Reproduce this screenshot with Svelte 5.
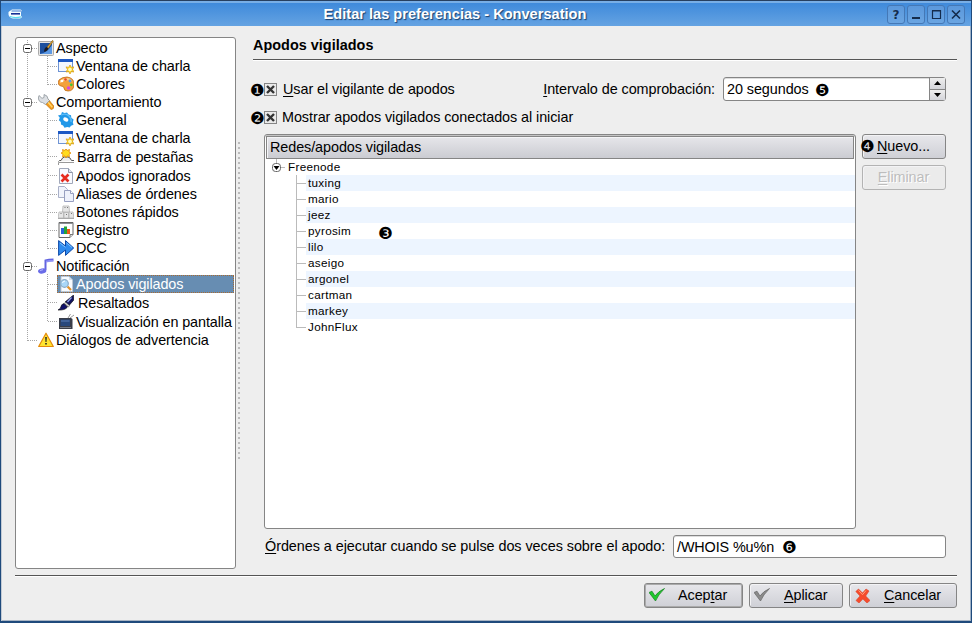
<script>
  const tree = [
    { text: 'Aspecto', icon: 'aspect', level: 0, h: 18, open: true },
    { text: 'Ventana de charla', icon: 'window', level: 1, h: 18 },
    { text: 'Colores', icon: 'palette', level: 1, h: 18 },
    { text: 'Comportamiento', icon: 'wrench', level: 0, h: 18, open: true },
    { text: 'General', icon: 'gear', level: 1, h: 18 },
    { text: 'Ventana de charla', icon: 'window', level: 1, h: 18 },
    { text: 'Barra de pestañas', icon: 'tab', level: 1, h: 19, wide: 1 },
    { text: 'Apodos ignorados', icon: 'ignore', level: 1, h: 19 },
    { text: 'Aliases de órdenes', icon: 'copy', level: 1, h: 18 },
    { text: 'Botones rápidos', icon: 'keys', level: 1, h: 18 },
    { text: 'Registro', icon: 'log', level: 1, h: 18 },
    { text: 'DCC', icon: 'forward', level: 1, h: 18 },
    { text: 'Notificación', icon: 'note', level: 0, h: 18, open: true },
    { text: 'Apodos vigilados', icon: 'search', level: 1, h: 18, selected: true },
    { text: 'Resaltados', icon: 'brush', level: 1, h: 19, wide: 2 },
    { text: 'Visualización en pantalla', icon: 'tv', level: 1, h: 19 },
    { text: 'Diálogos de advertencia', icon: 'warning', level: 0, h: 18 }
  ];
  // Vertical centre of every row, used by the connector lines.
  const mids = tree.map((r, i) => tree.slice(0, i).reduce((s, q) => s + q.h, 0) + Math.floor(r.h / 2) + 2);
  const nicks = ['tuxing', 'mario', 'jeez', 'pyrosim', 'lilo', 'aseigo', 'argonel', 'cartman', 'markey', 'JohnFlux'];
</script>

{#snippet icon(name)}
  <svg class="icon" width="16" height="16" viewBox="0 0 16 16">
    {#if name === 'aspect'}
      <rect x=".5" y="1.5" width="15" height="14" rx="1" fill="#e4e4e4" stroke="#aaa" />
      <rect x="2" y="3" width="12" height="11" fill="#1c4f9e" />
      <path d="M2 14Q9 13 14 5v9z" fill="#5b98e4" />
      <path d="M14.600 .3L8.800 7.200l1.500 1.300 5-7.300z" fill="#e5a52c" stroke="#6b4a12" stroke-width=".5" />
      <path d="M8.700 7Q6.200 7.800 6 11.800 9.500 11.500 10.400 8.500z" fill="#1a1a22" />
    {:else if name === 'window'}
      <rect x=".5" y="1.5" width="14" height="12" fill="#f3f7ff" stroke="#6f94d4" />
      <path d="M0 1h15v3H0z" fill="#1c58c4" />
      <path d="M12 7l1.300 2.400 2.700-.5-1.500 2.400L16 14l-2.700-.4L12 16l-1.300-2.400L8 14l1.500-2.600L8 8.900l2.700.5z" fill="#ffd829" stroke="#d99a10" stroke-width=".7" />
      <circle cx="12" cy="11.500" r="1.800" fill="#fffbc0" />
    {:else if name === 'palette'}
      <path d="M1 4Q4 1 9 1q7 1 7 7 0 7-6 7-4 0-4-3 0-2-3-2Q-1 9 1 4z" fill="#f3a13b" stroke="#c26a12" stroke-width=".8" />
      <path d="M2 4.500Q5 2 9 2q4 0 5 3Q8 3 2 7z" fill="#fbd08c" />
      <circle cx="4" cy="5" r="1.300" fill="#fff" /><circle cx="7.500" cy="3.500" r="1.300" fill="#e5452c" />
      <circle cx="12" cy="5" r="1.400" fill="#4f9bf0" /><circle cx="13.300" cy="8.800" r="1.400" fill="#42c832" />
      <circle cx="10.500" cy="12" r="1.700" fill="#d748e0" />
    {:else if name === 'wrench'}
      <path d="M6.500 9l4-3.500 5.300 6.500q.5 3-2.500 3.700z" fill="#f39a1c" stroke="#b86a08" stroke-width=".6" />
      <path d="M9.800 8l4.500 5.300" stroke="#ffd56a" stroke-width="1.500" />
      <path d="M1 1.500l3 2.800L6 3.500V.5q4 1 4 4.500l1.500 1.500-4 4-3-2Q1 8.500.3 4z" fill="#dcdfe3" stroke="#8e959c" stroke-width=".8" />
    {:else if name === 'gear'}
      <path d="M4 0l2.500 1L9 .5l1.500 2 2.500.7.3 2.500 2.300 1.800-.8 2.700.7 2.600-2.500 1-1.300 1.800-2.500-.6-2.700.7-1.400-2.200L3 12.500l-.2-2.600L.8 8.300l1-2.500L0 3.500l3-.8z" fill="#2298e8" />
      <path d="M3 3q5-2 8 1t2 6" fill="none" stroke="#5dbdf8" stroke-width="1.300" />
      <ellipse cx="7.800" cy="7.500" rx="2.700" ry="2" fill="#fff" transform="rotate(25 7.800 7.500)" />
    {:else if name === 'tab'}
      <path d="M.5 12.500l1-1H3q1.500-3.500 3.500-3.500H10q2 0 3.500 3.500H16" fill="#eee" stroke="#555" />
      <path d="M.5 16v-2.500H16" fill="none" stroke="#999" />
      <path d="M8-.5l1 2 2.500-1-.5 2.500 2 1-2 1.200.5 2.600L9 6.900 8 9 7 6.900 4.500 7.800 5 5.200 3 4l2-1-.5-2.500L7 1.500z" fill="#ffdc20" stroke="#e38b08" stroke-width=".8" />
    {:else if name === 'ignore'}
      <path d="M1.500.5h9l4 4v11h-13z" fill="#f8faff" stroke="#a1a8ba" /><path d="M10.500.5v4h4" fill="#dde3ee" stroke="#8e96a8" />
      <path d="M3.500 6.500l7 7M10.500 6.500l-7 7" stroke="#e62c20" stroke-width="2.600" />
    {:else if name === 'copy'}
      <path d="M.5.500h6l3 3v8h-9z" fill="#f1f4fc" stroke="#a9b0c8" /><path d="M6.500 4.500h6l3 3v8h-9z" fill="#eef1fb" stroke="#979fc0" />
      <path d="M12.500 4.500v3h3" fill="#fff" stroke="#979fc0" />
    {:else if name === 'keys'}
      <g fill="#e6e6e6" stroke="#b4b4b4" stroke-width=".8"><path d="M5 2h6l.5 6h-7zM1 8h4.500v6H0zM6 8.500h4.500V14H6zM11 8h4l1 6h-5z" /></g>
      <path d="M6.500 3.500h1M9 3.500h1M2.500 9.500h1M8 10.500h1M13 9.500h1" stroke="#777" /><path d="M0 14.500h16" stroke="#aaa" />
    {:else if name === 'log'}
      <path d="M1 .5h14v12l-3 3H1z" fill="#fff" stroke="#666" /><path d="M1 1.500h14" stroke="#8a8f94" />
      <path d="M15 12.500h-3v3" fill="#ddd" stroke="#777" />
      <path d="M3 6h3v6H3z" fill="#2a64d8" /><path d="M6 4.500h3V12H6z" fill="#25a637" /><path d="M9 7h3v5H9z" fill="#ef5a18" />
    {:else if name === 'forward'}
      <path d="M.600 .600L7.500 6V.6L15.700 8l-8.200 7.400V10L.6 15.400z" fill="#308bee" stroke="#0e49a8" />
      <path d="M2 3l5.500 4.300M8.500 2.800L14 7.500" stroke="#80c4ff" fill="none" />
    {:else if name === 'note'}
      <path d="M7.500 12V2.500q3-1 8-1" fill="none" stroke="#6264e0" stroke-width="2" /><path d="M8 3.700q3-1 7.500-.8" fill="none" stroke="#8f92f4" stroke-width="1.800" />
      <ellipse cx="4.200" cy="13" rx="4.200" ry="2.500" fill="#6a6ce8" transform="rotate(-12 4.200 13)" /><path d="M2 12.500l3-.8" stroke="#b5b8ff" />
    {:else if name === 'search'}
      <path d="M3 .5h8l3.500 3.500v11.500H3z" fill="#f7fbff" stroke="#bcc7d3" /><path d="M11 .500v3.500h3.500" fill="#d5dfe9" />
      <path d="M9.500 10.500l3.500 3.500" stroke="#e2912b" stroke-width="2.200" /><circle cx="6.500" cy="7.500" r="3.800" fill="#a9d7f8" stroke="#8aabc6" stroke-width="1.200" /><path d="M4.500 7q.5-2 2.500-2" stroke="#fff" fill="none" />
    {:else if name === 'brush'}
      <path d="M15.500 0l.3 5-4.800 5.500-4-3.500z" fill="#11125e" stroke="#000" stroke-width=".6" /><path d="M13.500 2.500l-4 4.500" stroke="#8fa0e8" stroke-width="1.300" />
      <path d="M7.500 7l4 3.500-1 1.500-4-3.500z" fill="#ddd" stroke="#333" stroke-width=".5" />
      <path d="M6 8.500l3.500 3.500Q7 15.500 0 15q3-1.500 3-3.500t3-3z" fill="#10106a" stroke="#000" stroke-width=".6" />
    {:else if name === 'tv'}
      <path d="M10 4l2.500-4M12 4l4-3" stroke="#999" /><path d="M1 4h12l1.500 1v10H1z" fill="#393d48" /><rect x="2.500" y="5.500" width="9.500" height="6.500" fill="#28487c" />
      <path d="M3 6h8.500v2H3z" fill="#41639a" /><path d="M2 13.500h11" stroke="#777d88" />
    {:else if name === 'warning'}
      <path d="M8 1.200L15.300 14.500H.7z" fill="#ffe430" stroke="#e48a0b" stroke-width="1.200" stroke-linejoin="round" /><path d="M7.200 5h1.600l-.3 5h-1zM7.200 11h1.600v1.600H7.200z" fill="#222" />
    {:else if name === 'ok' || name === 'apply'}
      <path d="M0 4.500l3-1.300L6 8Q9 3.500 15.500.5 9 7 6.500 13z" transform="translate(0 1)" fill={name === 'ok' ? '#1fc92d' : '#8b8b8b'} stroke={name === 'ok' ? '#14801d' : '#666'} stroke-width=".7" />
    {:else if name === 'cancel'}
      <path d="M3.500 1L7.500 5 11 1l3 2-3.300 5 4.300 4.500-3 2.500-4.200-4L4 15l-3-2.500L5 8 .8 3.500z" transform="translate(1 1)" fill="#f64b2c" stroke="#d8452c" stroke-width=".6" /><path d="M4.500 3.500l4 4.200L12 3.500" fill="none" stroke="#ffa17c" />
    {/if}
  </svg>
{/snippet}

<div class="window">
  <header>
    <svg class="logo" width="16" height="12" viewBox="0 0 16 12">
      <path d="M4 1.500h8.500l1.500 1-1 1.500v4l1.200 1-2 1.500H5Q1 9.500.5 6.500V4z" fill="#f4fcff" />
      <path d="M3.500 3h10" stroke="#3f78cf" /><path d="M3 5.800h9" stroke="#142f96" stroke-width="1.600" />
      <path d="M2 8.500q5 2 11 .300" stroke="#58dbee" stroke-width="1.200" fill="none" />
    </svg>
    <h1>Editar las preferencias - Konversation</h1>
    <div class="wbtns">
      <button class="wb">?</button>
      <button class="wb"><svg width="16" height="17"><path d="M4 12h8" stroke="#142c4c" stroke-width="2" /></svg></button>
      <button class="wb"><svg width="16" height="17"><path d="M4 4.500h8.500v8H4.500v-8M4 5h8" fill="none" stroke="#142c4c" stroke-width="1.200" /></svg></button>
      <button class="wb"><svg width="16" height="17"><path d="M4 4.500l8 8M12 4.500l-8 8" stroke="#142c4c" stroke-width="1.600" /></svg></button>
    </div>
  </header>

  <div class="body">
    <nav>
      <svg class="lines" width="60" height="312">
        <g stroke="#a6a6a6" stroke-dasharray="1 1" fill="none">
          <path d="M11.500 2V{mids[16]}M31.500 18V{mids[2]}M31.500 72V{mids[11]}M31.500 236V{mids[15]}" />
          {#each tree as row, i}
            {#if row.level}<path d="M32 {mids[i] - .5}h9" />{:else}<path d="M12 {mids[i] - .5}h9" />{/if}
          {/each}
        </g>
        {#each tree as row, i}
          {#if row.open}
            <rect x="7.500" y={mids[i] - 4.5} width="8" height="8" rx="2" fill="#fff" stroke="#666" />
            <path d="M9 {mids[i] - .5}h5" stroke="#000" />
          {/if}
        {/each}
      </svg>
      {#each tree as row}
        <div class="row" class:child={row.level} class:selected={row.selected} style:height="{row.h}px">
          {@render icon(row.icon)}<span style:margin-left="{row.wide ?? 0}px">{row.text}</span>
        </div>
      {/each}
    </nav>
    <div class="splitter"></div>

    <main>
      <h2>Apodos vigilados</h2>
      <div class="opts">
        <div class="checks">
          <div class="check"><b class="badge">❶</b><i class="box"><svg width="11" height="11"><path d="M2 2l7 7M9 2l-7 7" stroke="#333" stroke-width="2.400" /></svg></i><span class="c1"><u>U</u>sar el vigilante de apodos</span></div>
          <div class="check"><b class="badge">❷</b><i class="box"><svg width="11" height="11"><path d="M2 2l7 7M9 2l-7 7" stroke="#333" stroke-width="2.400" /></svg></i><span class="c2">Mostrar apodos vigilados conectados al iniciar</span></div>
        </div>
        <div class="interval">
          <span class="ilabel"><u>I</u>ntervalo de comprobación:</span>
          <div class="spin">
            <span class="sec">20 segundos</span><b class="badge">❺</b>
            <div class="arrows"><i><svg width="7" height="4"><path d="M3.500 0L7 4H0z" /></svg></i><i><svg width="7" height="4"><path d="M3.500 4L7 0H0z" /></svg></i></div>
          </div>
        </div>
      </div>

      <div class="middle">
        <div class="list">
          <div class="lhead">Redes/apodos vigiladas</div>
          <div class="net">
            <svg width="20" height="16"><path d="M11.500 0v4M15 8.500h5" stroke="#bbb" /><rect x="7.500" y="4.500" width="8" height="8" rx="3" fill="#fff" stroke="#666" /><path d="M8.500 7h6l-3 4z" /></svg>
            <span>Freenode</span>
          </div>
          {#each nicks as nick, i}
            <div class="nick" class:last={i === nicks.length - 1}>
              <i class="branch"></i>
              <div class="cell" class:alt={i % 2 === 0}>{nick}{#if nick === 'pyrosim'}<b class="badge three">❸</b>{/if}</div>
            </div>
          {/each}
        </div>
        <div class="side">
          <button class="btn"><b class="badge four">❹</b><span><u>N</u>uevo...</span></button>
          <button class="btn disabled"><span><u>E</u>liminar</span></button>
        </div>
      </div>

      <div class="command">
        <span class="clabel"><u>Ó</u>rdenes a ejecutar cuando se pulse dos veces sobre el apodo:</span>
        <div class="field"><span>/WHOIS %u%n</span><b class="badge">❻</b></div>
      </div>
    </main>
  </div>

  <footer>
    <button class="btn ok">{@render icon('ok')}<span>Acep<u>t</u>ar</span></button>
    <button class="btn apply">{@render icon('apply')}<span><u>A</u>plicar</span></button>
    <button class="btn cancel">{@render icon('cancel')}<span><u>C</u>ancelar</span></button>
  </footer>
</div>

<style>
  :global(body) { margin: 0; background: #eee; }
  * { box-sizing: border-box; }
  .window { width: 972px; height: 623px; display: flex; flex-direction: column; background: #eee; border: 1px solid #1f4a7c; border-bottom-width: 2px; border-top-color: #263f60; font: 14.4px/18px "Liberation Sans", Arial, sans-serif; letter-spacing: -.07px; color: #000; box-shadow: inset 1px 0 #c3cbd5, inset -1px 0 #9db0c6, inset 0 -1px #a9b5c4; overflow: hidden; white-space: nowrap; }
  header { height: 25px; flex: none; display: flex; align-items: center; background: linear-gradient(#78aee6 0 2px, #3f8adb 2px, #65a3e2); }
  .logo { margin-left: 7px; }
  h1 { flex: 1; margin: 1px 0 0; text-align: center; padding-right: 1px; font-size: 14.6px; line-height: 18px; letter-spacing: 0; color: #fff; text-shadow: 1px 1px 1px #193e6a; }
  .wbtns { display: flex; gap: 2px; margin: 2px 6px 0 0; }
  .wb { width: 18px; height: 19px; padding: 0; border: 1px solid #4478b6; border-radius: 3px; background: linear-gradient(#5b98dc, #6aa5e2); font: bold 12px/16px "DejaVu Sans", sans-serif; color: #142c4c; }
  .wb svg { display: block; }
  .body { display: flex; height: 538px; flex: none; padding: 11px 14px 0; }
  nav { position: relative; width: 221px; height: 532px; border: 1px solid #858585; border-radius: 3px; background: #fff; padding: 1px 1px 0 0; }
  .lines { position: absolute; left: 0; top: 0; }
  .row { display: flex; align-items: center; padding-left: 22px; gap: 2px; }
  .row span { line-height: 18px; }
  .row.child { margin-left: 41px; padding-left: 1px; letter-spacing: -.09px; }
  .selected { background: #678db2; color: #fff; outline: 1px dotted #a86b32; outline-offset: -1px; }
  .icon { flex: none; display: block; }
  .splitter { width: 2px; height: 318px; margin: 105px 13px 0 2px; background: repeating-linear-gradient(#aaa 0 2px, transparent 2px 5px); opacity: .75; }
  main { width: 704px; display: flex; flex-direction: column; }
  h2 { height: 23px; margin: 0; font-size: 14.4px; line-height: 16px; letter-spacing: .03px; border-bottom: 1px solid #555; box-shadow: 0 1px #fff; }
  .opts { display: flex; justify-content: space-between; height: 74px; padding: 17px 11px 0 0; }
  .checks { display: flex; flex-direction: column; gap: 8px; width: 290px; margin: 2px 0 0 -3px; }
  .check { display: flex; align-items: center; height: 20px; }
  .badge { font: 16.500px/15px "DejaVu Sans", sans-serif; letter-spacing: 0; width: 13px; flex: none; }
  .check .badge, .field .badge, .spin .badge { position: relative; top: 1px; }
  .box { width: 13px; height: 13px; flex: none; margin-left: 1px; border: 1px solid #858585; background: #eaeaea; }
  .box svg, .arrows svg { display: block; }
  .c1 { margin-left: 6px; } .c2 { margin-left: 5px; }
  u { text-underline-offset: 2px; text-decoration-thickness: 1px; }
  .interval { display: flex; align-items: flex-start; }
  .ilabel { margin: 3px 8px 0 0; }
  .spin, .field { display: flex; align-items: center; height: 24px; border: 1px solid #858585; border-radius: 3px; background: #fff; padding-left: 3px; box-shadow: inset 0 1px #ddd; }
  .spin { width: 223px; }
  .sec { width: 88px; }
  .arrows { display: flex; flex-direction: column; width: 16px; height: 22px; margin-left: auto; border-left: 1px solid #858585; }
  .arrows i { flex: 1; display: grid; place-items: center; background: linear-gradient(#eee, #d4d5da); }
  .arrows i + i { border-top: 1px solid #858585; }
  .middle { display: flex; margin-left: 11px; gap: 6px; }
  .list { width: 592px; height: 395px; border: 1px solid #858585; border-radius: 3px; background: #fff; box-shadow: inset 0 1px #c4c4c4; font: 11.7px/16px "Liberation Sans", Arial, sans-serif; letter-spacing: .3px; }
  .lhead { height: 23px; margin: 1px 1px 0; border: 1px solid #858585; box-shadow: inset 1px 1px #f4f4f6; background: linear-gradient(#e6e6ea, #cbccd2); padding-left: 3px; font-size: 14.4px; line-height: 21px; letter-spacing: -.08px; }
  .net { display: flex; height: 16px; gap: 3px; }
  .nick { display: flex; height: 16px; padding-left: 31px; }
  .branch { width: 10px; border-left: 1px solid #bbb; background: linear-gradient(#bbb, #bbb) 0 8px / 10px 1px no-repeat; }
  .last .branch { height: 9px; }
  .cell { flex: 1; padding-left: 2px; position: relative; }
  .alt { background: #edf5ff; }
  .three { position: absolute; left: 72px; top: 3px; }
  .side { display: flex; flex-direction: column; gap: 6px; }
  .btn { position: relative; height: 25px; padding: 0 0 2px; border: 1px solid #858585; border-radius: 3px; background: linear-gradient(#e7e7eb, #cfd0d6); box-shadow: inset 1px 1px #f3f3f5; font: inherit; letter-spacing: inherit; color: #000; display: flex; align-items: center; }
  .side .btn { width: 84px; justify-content: center; }
  .side span { margin-right: 1px; }
  .four { position: absolute; left: -3px; top: 4px; }
  .disabled { background: #ebebeb; color: #bdbdbd; border-color: #b3b3b3; text-shadow: 1px 1px #fff; }
  .command { display: flex; margin: 6px 11px 0 12px; justify-content: space-between; }
  .clabel { line-height: 22px; letter-spacing: -.05px; }
  .field { width: 273px; height: 23px; }
  .field span { width: 105px; letter-spacing: -.12px; }
  footer { flex: none; display: flex; justify-content: flex-end; gap: 6px; height: 40px; margin: 11px 14px 0; border-top: 1px solid #555; box-shadow: inset 0 1px #fff; padding-top: 7px; }
  footer .btn { padding-left: 4px; }
  footer span { margin-left: 13px; }
  .ok { width: 99px; box-shadow: inset 0 0 0 1px #aaa; }
  .apply { width: 94px; }
  .apply span { margin-left: 14px; }
  .cancel { width: 108px; }
  .cancel span { margin-left: 14px; }
</style>
